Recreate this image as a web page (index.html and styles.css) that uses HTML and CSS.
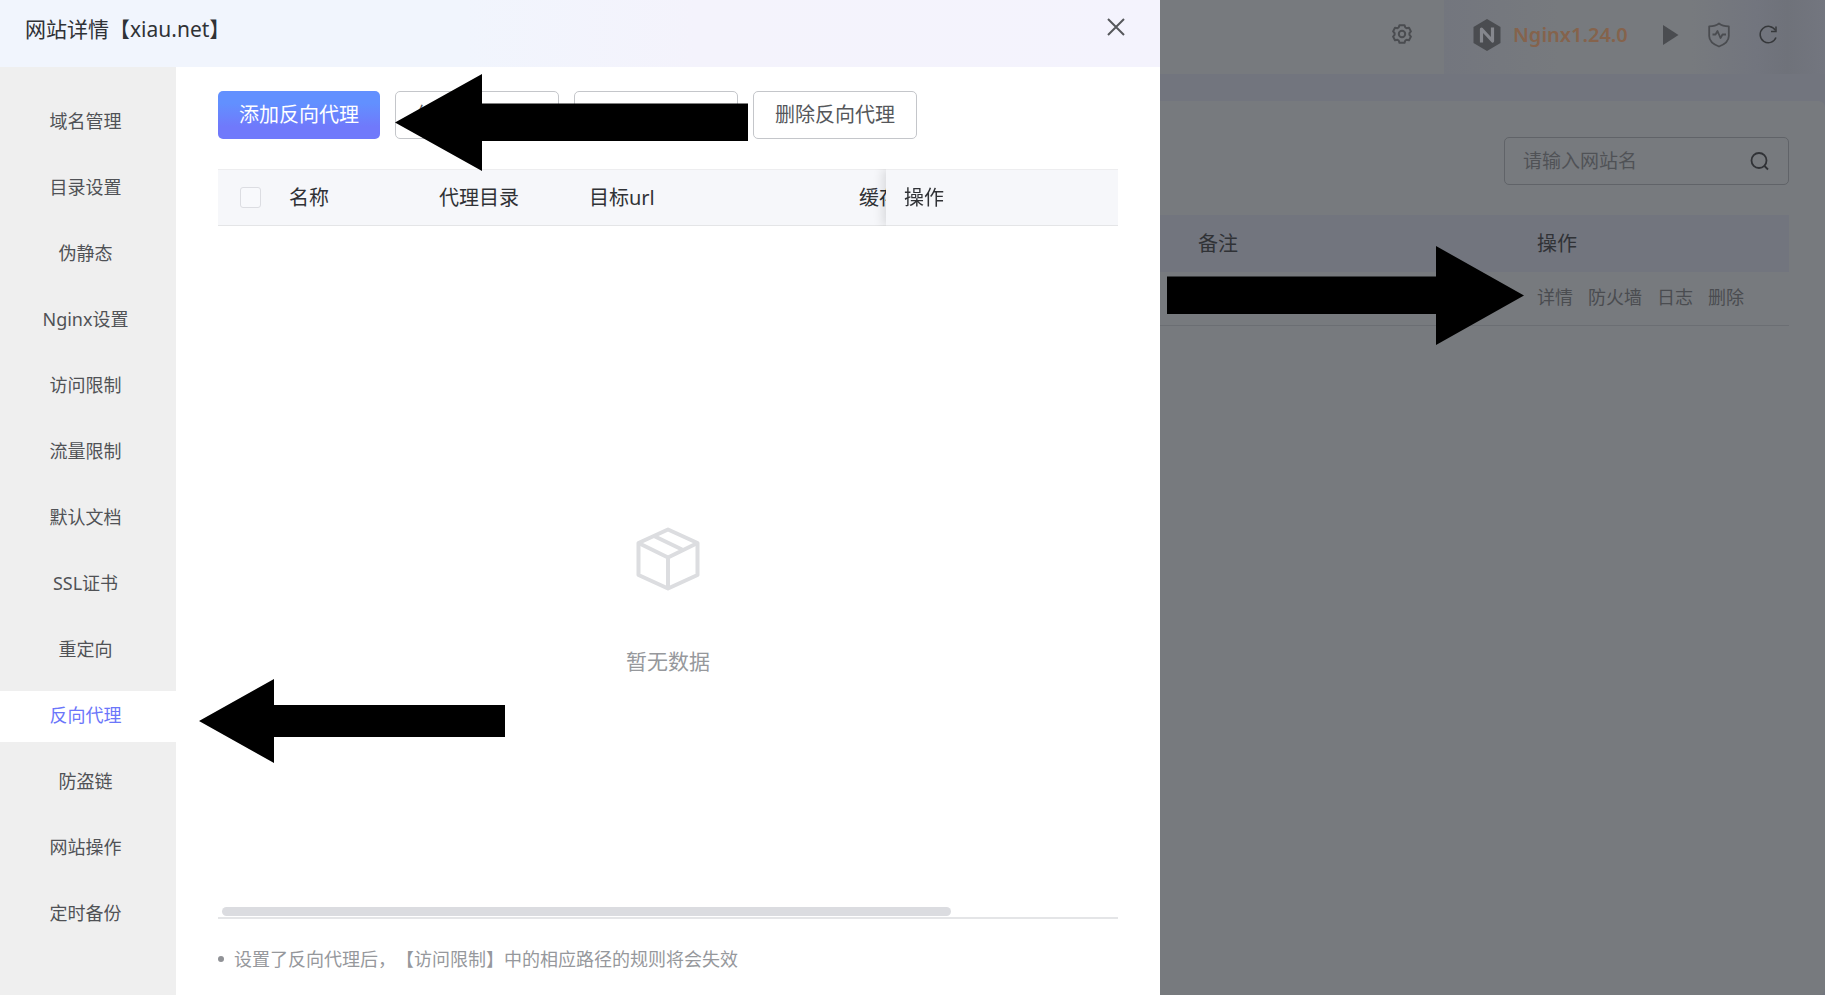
FILE: index.html
```html
<!DOCTYPE html>
<html lang="zh-CN">
<head>
<meta charset="utf-8">
<title>网站详情</title>
<link rel="stylesheet" href="styles.css">
</head>
<body>
<div class="page">
  <header class="topbar">
    <button class="icon-btn gear" aria-label="设置">
      <svg width="20" height="20" viewBox="0 0 20 20" fill="none" stroke="currentColor" stroke-width="2" stroke-linejoin="round"><path d="M7.500 1.200h5l.8 2.300 1.200.7 2.500-.4 1.900 3.600-1.500 1.800v1.600l1.500 1.800-1.900 3.600-2.500-.4-1.200.7-.8 2.300h-5l-.8-2.300-1.200-.7-2.500.4-1.900-3.600 1.500-1.800V9.200L1.100 7.400 3 3.800l2.500.4 1.200-.7z"/><circle cx="10" cy="10" r="3.200"/></svg>
    </button>
    <div class="service">
      <svg class="logo" width="28" height="32" viewBox="0 0 28 32"><path d="M14 0l13.500 8v16L14 32 .5 24V8z" fill="#4a4c50"/><path d="M8.500 22V10l11 12V10" fill="none" stroke="#85878d" stroke-width="3.200" stroke-linejoin="round" stroke-linecap="square"/></svg>
      <span class="service-name">Nginx1.24.0</span>
      <button class="icon-btn play" aria-label="启动"><svg width="16" height="20" viewBox="0 0 16 20"><path d="M0 0l15.500 10L0 20z" fill="currentColor"/></svg></button>
      <button class="icon-btn shield" aria-label="防护"><svg width="22" height="26" viewBox="0 0 22 26" fill="none" stroke="currentColor" stroke-width="1.800" stroke-linejoin="round"><path d="M11 1.500C8.500 3.500 5 4.300 1.200 4.300V14c0 5 4.500 8.500 9.800 10.500 5.300-2 9.800-5.500 9.800-10.500V4.300C17 4.300 13.500 3.500 11 1.500z"/><path d="M4.500 12.500h3L9.500 9l3 7 2-3.500h3.500"/></svg></button>
      <button class="icon-btn refresh" aria-label="刷新"><svg width="20" height="20" viewBox="0 0 20 20" fill="none" stroke="currentColor" stroke-width="1.500"><path d="M17.500 5.500A8.200 8.200 0 1 0 18 12.500"/><path d="M18 1.500v5h-5"/></svg></button>
    </div>
  </header>
  <main class="card">
    <label class="search">
      <input type="text" placeholder="请输入网站名" aria-label="请输入网站名">
      <svg width="20" height="20" viewBox="0 0 20 20" fill="none" stroke="#303236" stroke-width="1.800"><circle cx="9" cy="9.500" r="7.500"/><path d="M14.500 15l3.500 3.500"/></svg>
    </label>
    <table class="sites">
      <colgroup><col><col class="c-note"><col class="c-act"></colgroup>
      <thead><tr><th></th><th>备注</th><th>操作</th></tr></thead>
      <tbody><tr><td></td><td></td><td><div class="links"><a href="#">详情</a><a href="#">防火墙</a><a href="#">日志</a><a href="#">删除</a></div></td></tr></tbody>
    </table>
  </main>
</div>

<section class="drawer" role="dialog" aria-labelledby="drawer-title">
  <header class="drawer-head">
    <h1 id="drawer-title">网站详情【xiau.net】</h1>
    <button class="icon-btn close" aria-label="关闭"><svg width="18" height="18" viewBox="0 0 18 18" fill="none" stroke="currentColor" stroke-width="2"><path d="M1 1l16 16M17 1L1 17"/></svg></button>
  </header>
  <div class="drawer-body">
    <nav class="side">
      <a href="#">域名管理</a>
      <a href="#">目录设置</a>
      <a href="#">伪静态</a>
      <a href="#">Nginx设置</a>
      <a href="#">访问限制</a>
      <a href="#">流量限制</a>
      <a href="#">默认文档</a>
      <a href="#">SSL证书</a>
      <a href="#">重定向</a>
      <a href="#" class="active" aria-current="page">反向代理</a>
      <a href="#">防盗链</a>
      <a href="#">网站操作</a>
      <a href="#">定时备份</a>
    </nav>
    <div class="content">
      <div class="toolbar">
        <button class="btn primary">添加反向代理</button>
        <button class="btn">编辑反向代理</button>
        <button class="btn" aria-label="反向代理"></button>
        <button class="btn">删除反向代理</button>
      </div>
      <div class="grid">
        <div class="scroll">
          <table class="proxies">
            <colgroup><col class="p-check"><col class="p-name"><col class="p-name"><col class="p-url"><col><col class="p-act"></colgroup>
            <thead><tr>
              <th class="check"><input type="checkbox" aria-label="全选"></th>
              <th>名称</th><th>代理目录</th><th>目标url</th><th>缓存</th><th class="fixed">操作</th>
            </tr></thead>
          </table>
        </div>
        <div class="empty">
          <svg width="64" height="64" viewBox="0 0 64 64" fill="none" stroke="#dcdde0" stroke-width="4" stroke-linejoin="round"><path d="M32 2.500L61.500 16v32L32 61.500 2.500 48V16z"/><path d="M2.500 16L32 30.500 61.500 16M32 30.500v31M18 9l28 13.500"/></svg>
          <p>暂无数据</p>
        </div>
        <div class="thumb"></div>
      </div>
      <ul class="tips"><li>设置了反向代理后，【访问限制】中的相应路径的规则将会失效</li></ul>
    </div>
  </div>
</section>

<svg class="arrow arrow-add" width="353" height="97" viewBox="0 0 353 97"><path d="M0 48.500L87 0v29.500h266V67H87v30z"/></svg>
<svg class="arrow arrow-menu" width="306" height="84" viewBox="0 0 306 84"><path d="M0 42L75 0v26h231v32H75v26z"/></svg>
<svg class="arrow arrow-detail" width="357" height="99" viewBox="0 0 357 99"><path d="M357 49.500L269 0v30.500H0V68h269v31z"/></svg>
</body>
</html>
```
FILE: styles.css
```css
* { box-sizing: border-box; }
body {
  margin: 0;
  min-height: 100vh;
  overflow: hidden;
  font-family: "Noto Sans", "Noto Sans CJK SC", sans-serif;
  font-size: 18px;
  line-height: 28px;
  text-spacing-trim: space-all;
  background: #72757e;
  color: #303236;
}
a { color: inherit; text-decoration: none; }
button, input { font: inherit; }
h1, p, ul { margin: 0; padding: 0; font-weight: 400; }
svg { display: block; flex: none; }
.icon-btn { display: block; padding: 0; border: 0; background: none; color: #4a4c50; }

/* page behind the drawer */
.page { display: flex; flex-direction: column; min-height: 100vh; }
.topbar {
  display: flex;
  justify-content: flex-end;
  align-items: stretch;
  height: 74px;
  margin-bottom: 27px;
  background: #777a7e;
}
.gear { margin-right: 32px; padding-bottom: 6px; }
.service {
  display: flex;
  align-items: center;
  width: 381px;
  padding: 0 47px 5px 29px;
  background: linear-gradient(90deg, #73767e 0, #777a7e 30%, #777a7e 65%, #72757e 82%, #6f727a 90%, #73767f 100%);
}
.service-name { margin-left: 12px; font-size: 20px; font-weight: 600; color: #85634c; }
.play { margin-left: auto; }
.shield { margin-left: 29px; }
.refresh { margin-left: 28px; color: #36383b; }
.card {
  flex: 1;
  padding: 36px 36px 0;
  border-radius: 6px;
  background: #777a7e;
}
.search {
  display: flex;
  align-items: center;
  width: 285px;
  height: 48px;
  margin: 0 0 30px auto;
  padding: 0 18px;
  border: 1px solid #606368;
  border-radius: 5px;
}
.search input {
  flex: 1;
  min-width: 0;
  padding: 0;
  border: 0;
  outline: 0;
  background: none;
  font-size: 19px;
}
.search input::placeholder { color: #505256; opacity: 1; }
.sites { width: 100%; border-collapse: collapse; table-layout: fixed; }
.c-note { width: 339px; }
.c-act { width: 268px; }
.sites th {
  height: 57px;
  padding: 0 16px;
  background: #72757e;
  font-size: 20px;
  font-weight: 400;
  text-align: left;
}
.sites td { height: 53px; padding: 0 16px 2px; border-bottom: 1px solid #6b6e73; color: #4a4c50; }
.links { display: flex; gap: 15px; }

/* drawer */
.drawer {
  position: fixed;
  inset: 0 auto 0 0;
  display: flex;
  flex-direction: column;
  width: 63.56%;
  background: #fff;
}
.drawer-head {
  display: flex;
  align-items: flex-start;
  justify-content: space-between;
  height: 67px;
  padding: 15px 35px 0 25px;
  background: linear-gradient(90deg, #f1f5fd, #f1f5fd 40%, #f4f3fc 60%, #f4f3fd);
}
.drawer-head h1 { font-size: 21px; line-height: 28px; }
.close { margin-top: 3px; color: #55575b; }
.drawer-body { display: flex; flex: 1; min-height: 0; }
.side {
  display: flex;
  flex-direction: column;
  gap: 15px;
  width: 176px;
  padding-top: 30px;
  background: #efefef;
  color: #505256;
}
.side a { height: 51px; padding-right: 5px; line-height: 49px; text-align: center; white-space: nowrap; }
.side .active { background: #fff; color: #6b76fa; }
.content {
  display: flex;
  flex: 1;
  flex-direction: column;
  min-width: 0;
  padding: 24px 42px 22px;
}
.toolbar { display: flex; gap: 15px; margin-bottom: 30px; }
.btn {
  min-width: 164px;
  height: 48px;
  padding: 0 21px;
  border: 1px solid #c4c6ca;
  border-radius: 5px;
  background: #fff;
  color: #55575b;
  font-size: 20px;
  white-space: nowrap;
}
.btn.primary {
  min-width: 162px;
  border: 0;
  background: linear-gradient(180deg, #6290ff 25%, #7079fb 75%);
  color: #fff;
}
.grid {
  position: relative;
  display: flex;
  flex: 1;
  flex-direction: column;
  border-bottom: 2px solid #e4e5e7;
}
.scroll { overflow: hidden; }
.proxies {
  width: 1100px;
  border-collapse: separate;
  border-spacing: 0;
  table-layout: fixed;
}
.p-check { width: 53px; }
.p-name { width: 150px; }
.p-url { width: 270px; }
.p-act { width: 232px; }
.proxies th {
  height: 57px;
  padding: 0 18px;
  border-top: 1px solid #ededef;
  border-bottom: 1px solid #e4e5e7;
  background: #f6f7fa;
  font-size: 20px;
  font-weight: 400;
  text-align: left;
  white-space: nowrap;
}
.proxies .check { padding: 0 0 0 22px; }
.check input {
  display: block;
  appearance: none;
  width: 21px;
  height: 21px;
  margin: 0;
  border: 1px solid #dcdde2;
  border-radius: 3px;
  background: #f8f9fc;
}
.proxies .fixed { position: sticky; right: 0; box-shadow: -3px 0 10px rgba(0, 0, 0, .12); }
.empty {
  display: flex;
  flex: 1;
  flex-direction: column;
  align-items: center;
  justify-content: center;
  gap: 56px;
  padding-top: 58px;
  color: #96989c;
  font-size: 21px;
}
.thumb {
  position: absolute;
  bottom: 1px;
  left: 4px;
  width: 81%;
  height: 9px;
  border-radius: 5px;
  background: #dbdce0;
}
.tips { margin-top: 26px; list-style: none; color: #96989c; }
.tips li { display: flex; align-items: center; gap: 10px; }
.tips li::before { content: ""; width: 6px; height: 6px; border-radius: 50%; background: #909296; }

/* pointers drawn over the screen */
.arrow { position: absolute; fill: #000; }
.arrow-add { left: 395px; top: 74px; }
.arrow-menu { left: 199px; top: 679px; }
.arrow-detail { left: 1167px; top: 246px; }
```
